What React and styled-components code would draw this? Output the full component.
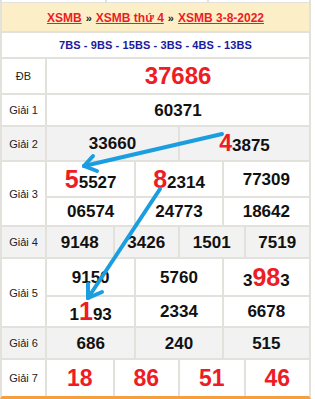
import React from "react";
import styled, { createGlobalStyle } from "styled-components";

const line = "#e3e1dc";
const red = "#ee1c25";

const Global = createGlobalStyle`
  html, body {
    margin: 0;
    padding: 0;
    background: #fff;
  }
  body {
    font-family: "Liberation Sans", Arial, sans-serif;
  }
`;

const Page = styled.div`
  position: relative;
  width: 315px;
  height: 399px;
  overflow: hidden;
`;

const Table = styled.div`
  width: 311px;
  box-sizing: border-box;
  border-left: 2px solid ${line};
  border-right: 2px solid ${line};
  border-bottom: 3px solid #f5a03c;
`;

const PrevRow = styled.div`
  display: grid;
  grid-template-columns: 103px 102px 1fr;
  height: 3px;
  box-sizing: border-box;
  border-bottom: 1px solid ${line};

  & > div + div {
    border-left: 2px solid ${line};
  }
`;

const Header = styled.div`
  height: 30px;
  box-sizing: border-box;
  background: #fcefc7;
  border-bottom: 2px solid ${line};
  display: flex;
  align-items: center;
  justify-content: center;
  font-size: 12px;
  font-weight: bold;
  padding-top: 2px;
`;

const Crumb = styled.a`
  color: ${red};
  text-decoration: underline;
`;

const Sep = styled.span`
  color: #222;
  font-size: 11px;
  margin: 0 4px;
`;

const Codes = styled.div`
  height: 26px;
  box-sizing: border-box;
  border-bottom: 2px solid ${line};
  display: flex;
  align-items: center;
  justify-content: center;
  color: #1a1a9e;
  font-size: 11px;
  font-weight: bold;
  letter-spacing: 0.1px;
`;

const Row = styled.div`
  display: grid;
  grid-template-columns: 45px 1fr;
  height: ${(p) => p.$h}px;
  box-sizing: border-box;
  background: ${(p) => (p.$alt ? "#f2f2f2" : "#fff")};
  border-bottom: ${(p) => (p.$last ? "none" : `2px solid ${line}`)};
`;

const Label = styled.div`
  display: flex;
  align-items: center;
  justify-content: center;
  border-right: 2px solid ${line};
  font-size: 11px;
  color: #222;
`;

const Cells = styled.div`
  display: grid;
  grid-template-columns: repeat(${(p) => p.$cols}, 1fr);
  grid-template-rows: ${(p) => p.$rows || "1fr"};

  & > div + div {
    border-left: 2px solid ${line};
  }
  & > div:nth-child(${(p) => p.$cols}n + 1) {
    border-left: none;
  }
  & > div:nth-child(n + ${(p) => p.$cols + 1}) {
    border-top: 2px solid ${line};
  }
`;

const Cell = styled.div`
  display: flex;
  align-items: center;
  justify-content: center;
  min-width: 0;
`;

const Num = styled.span`
  font-size: ${(p) => p.$size || 17}px;
  font-weight: bold;
  color: ${(p) => (p.$red ? red : "#111")};
  line-height: 1;
`;

const Big = styled.span`
  font-size: ${(p) => p.$size || 25}px;
  color: ${red};
`;

const Overlay = styled.svg`
  position: absolute;
  left: 0;
  top: 0;
  pointer-events: none;
`;

const Arrow = ({ from, to, wings }) => (
  <g>
    <line x1={from[0]} y1={from[1]} x2={to[0]} y2={to[1]} />
    {wings.map((w, i) => (
      <line key={i} x1={to[0]} y1={to[1]} x2={w[0]} y2={w[1]} />
    ))}
  </g>
);

const prizes = [
  { label: "ĐB", h: 36, cols: 1, items: [<Num $size={24} $red>37686</Num>] },
  { label: "Giải 1", h: 32, cols: 1, items: [<Num>60371</Num>] },
  {
    label: "Giải 2",
    h: 35,
    cols: 2,
    alt: true,
    items: [
      <Num>33660</Num>,
      <Num>
        <Big $size={23}>4</Big>3875
      </Num>,
    ],
  },
  {
    label: "Giải 3",
    h: 65,
    cols: 3,
    rows: "34px 1fr",
    items: [
      <Num>
        <Big>5</Big>5527
      </Num>,
      <Num>
        <Big>8</Big>2314
      </Num>,
      <Num>77309</Num>,
      <Num>06574</Num>,
      <Num>24773</Num>,
      <Num>18642</Num>,
    ],
  },
  {
    label: "Giải 4",
    h: 32,
    cols: 4,
    alt: true,
    items: ["9148", "3426", "1501", "7519"].map((n) => <Num>{n}</Num>),
  },
  {
    label: "Giải 5",
    h: 69,
    cols: 3,
    rows: "36px 1fr",
    items: [
      <Num>9150</Num>,
      <Num>5760</Num>,
      <Num>
        3<Big>98</Big>3
      </Num>,
      <Num>
        1<Big>1</Big>93
      </Num>,
      <Num>2334</Num>,
      <Num>6678</Num>,
    ],
  },
  {
    label: "Giải 6",
    h: 32,
    cols: 3,
    alt: true,
    items: ["686", "240", "515"].map((n) => <Num>{n}</Num>),
  },
  {
    label: "Giải 7",
    h: 36,
    cols: 4,
    last: true,
    items: ["18", "86", "51", "46"].map((n) => (
      <Num $size={23} $red>
        {n}
      </Num>
    )),
  },
];

export default function App() {
  return (
    <Page>
      <Global />
      <Table>
        <PrevRow>
          <div />
          <div />
          <div />
        </PrevRow>
        <Header>
          <Crumb href="#">XSMB</Crumb>
          <Sep>»</Sep>
          <Crumb href="#">XSMB thứ 4</Crumb>
          <Sep>»</Sep>
          <Crumb href="#">XSMB 3-8-2022</Crumb>
        </Header>
        <Codes>7BS - 9BS - 15BS - 3BS - 4BS - 13BS</Codes>
        {prizes.map((p) => (
          <Row key={p.label} $h={p.h} $alt={p.alt} $last={p.last}>
            <Label>{p.label}</Label>
            <Cells $cols={p.cols} $rows={p.rows}>
              {p.items.map((item, i) => (
                <Cell key={i}>{item}</Cell>
              ))}
            </Cells>
          </Row>
        ))}
      </Table>
      <Overlay width="315" height="399" stroke="#1b9ee0" strokeWidth="4" strokeLinecap="round">
        <Arrow from={[222, 134]} to={[84, 166]} wings={[[97, 171], [93, 156]]} />
        <Arrow from={[160, 189]} to={[88, 298]} wings={[[102, 292], [88, 284]]} />
      </Overlay>
    </Page>
  );
}
